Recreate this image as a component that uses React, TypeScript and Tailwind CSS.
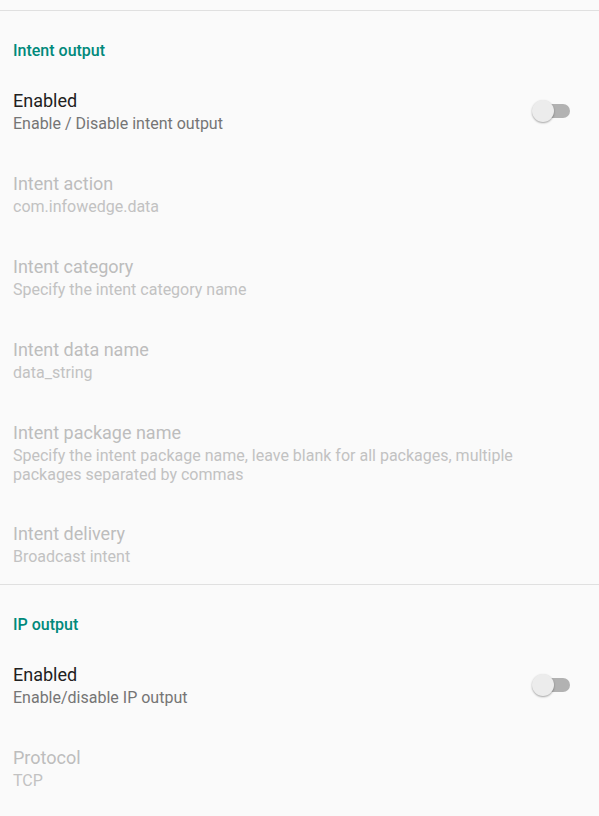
import React from "react";

type Pref = {
	title: string;
	summary: string;
	enabled?: boolean;
	toggle?: boolean;
	last?: boolean;
};

const intentPrefs: Pref[] = [
	{ title: "Enabled", summary: "Enable / Disable intent output", enabled: true, toggle: true },
	{ title: "Intent action", summary: "com.infowedge.data" },
	{ title: "Intent category", summary: "Specify the intent category name" },
	{ title: "Intent data name", summary: "data_string" },
	{
		title: "Intent package name",
		summary:
			"Specify the intent package name, leave blank for all packages, multiple packages separated by commas",
		last: true,
	},
	{ title: "Intent delivery", summary: "Broadcast intent", last: true },
];

const ipPrefs: Pref[] = [
	{ title: "Enabled", summary: "Enable/disable IP output", enabled: true, toggle: true },
	{ title: "Protocol", summary: "TCP" },
];

function Switch() {
	return (
		<div className="relative h-[24px] w-[40px] shrink-0">
			<div className="absolute left-[5px] right-[2px] top-[5px] h-[14px] rounded-full bg-[#b2b2b2]" />
			<div className="absolute left-0 top-px h-[22px] w-[22px] rounded-full bg-[#ececec] shadow-[0_1px_2px_rgba(0,0,0,0.35)]" />
		</div>
	);
}

function PrefRow({ pref }: { pref: Pref }) {
	return (
		<div
			className={`flex items-center pl-[13px] pr-[27px] pt-[20px] ${pref.last ? "pb-[18px]" : "pb-[19px]"}`}
		>
			<div className="min-w-0 flex-1 pr-14">
				<div
					className={`text-[18px] leading-[23px] ${pref.enabled ? "text-[#212121]" : "text-[#bdbdbd]"}`}
				>
					{pref.title}
				</div>
				<div
					className={`mt-[2px] text-[16px] leading-[19px] ${pref.enabled ? "text-[#757575]" : "text-[#c2c2c2]"}`}
				>
					{pref.summary}
				</div>
			</div>
			{pref.toggle && <Switch />}
		</div>
	);
}

function Category({ title, prefs }: { title: string; prefs: Pref[] }) {
	return (
		<div>
			<div className="h-px bg-[#e0e0e0]" />
			<div className="pl-[13px] pt-[30px] pb-[8px] text-[16px] font-medium leading-[20px] text-[#00897b]">
				{title}
			</div>
			{prefs.map((p) => (
				<PrefRow key={p.title + p.summary} pref={p} />
			))}
		</div>
	);
}

export default function App() {
	return (
		<div
			className="h-[816px] w-full overflow-hidden bg-[#fafafa] pt-[10px]"
			style={{ fontFamily: "Roboto, 'Noto Sans', sans-serif" }}
		>
			<Category title="Intent output" prefs={intentPrefs} />
			<Category title="IP output" prefs={ipPrefs} />
		</div>
	);
}
